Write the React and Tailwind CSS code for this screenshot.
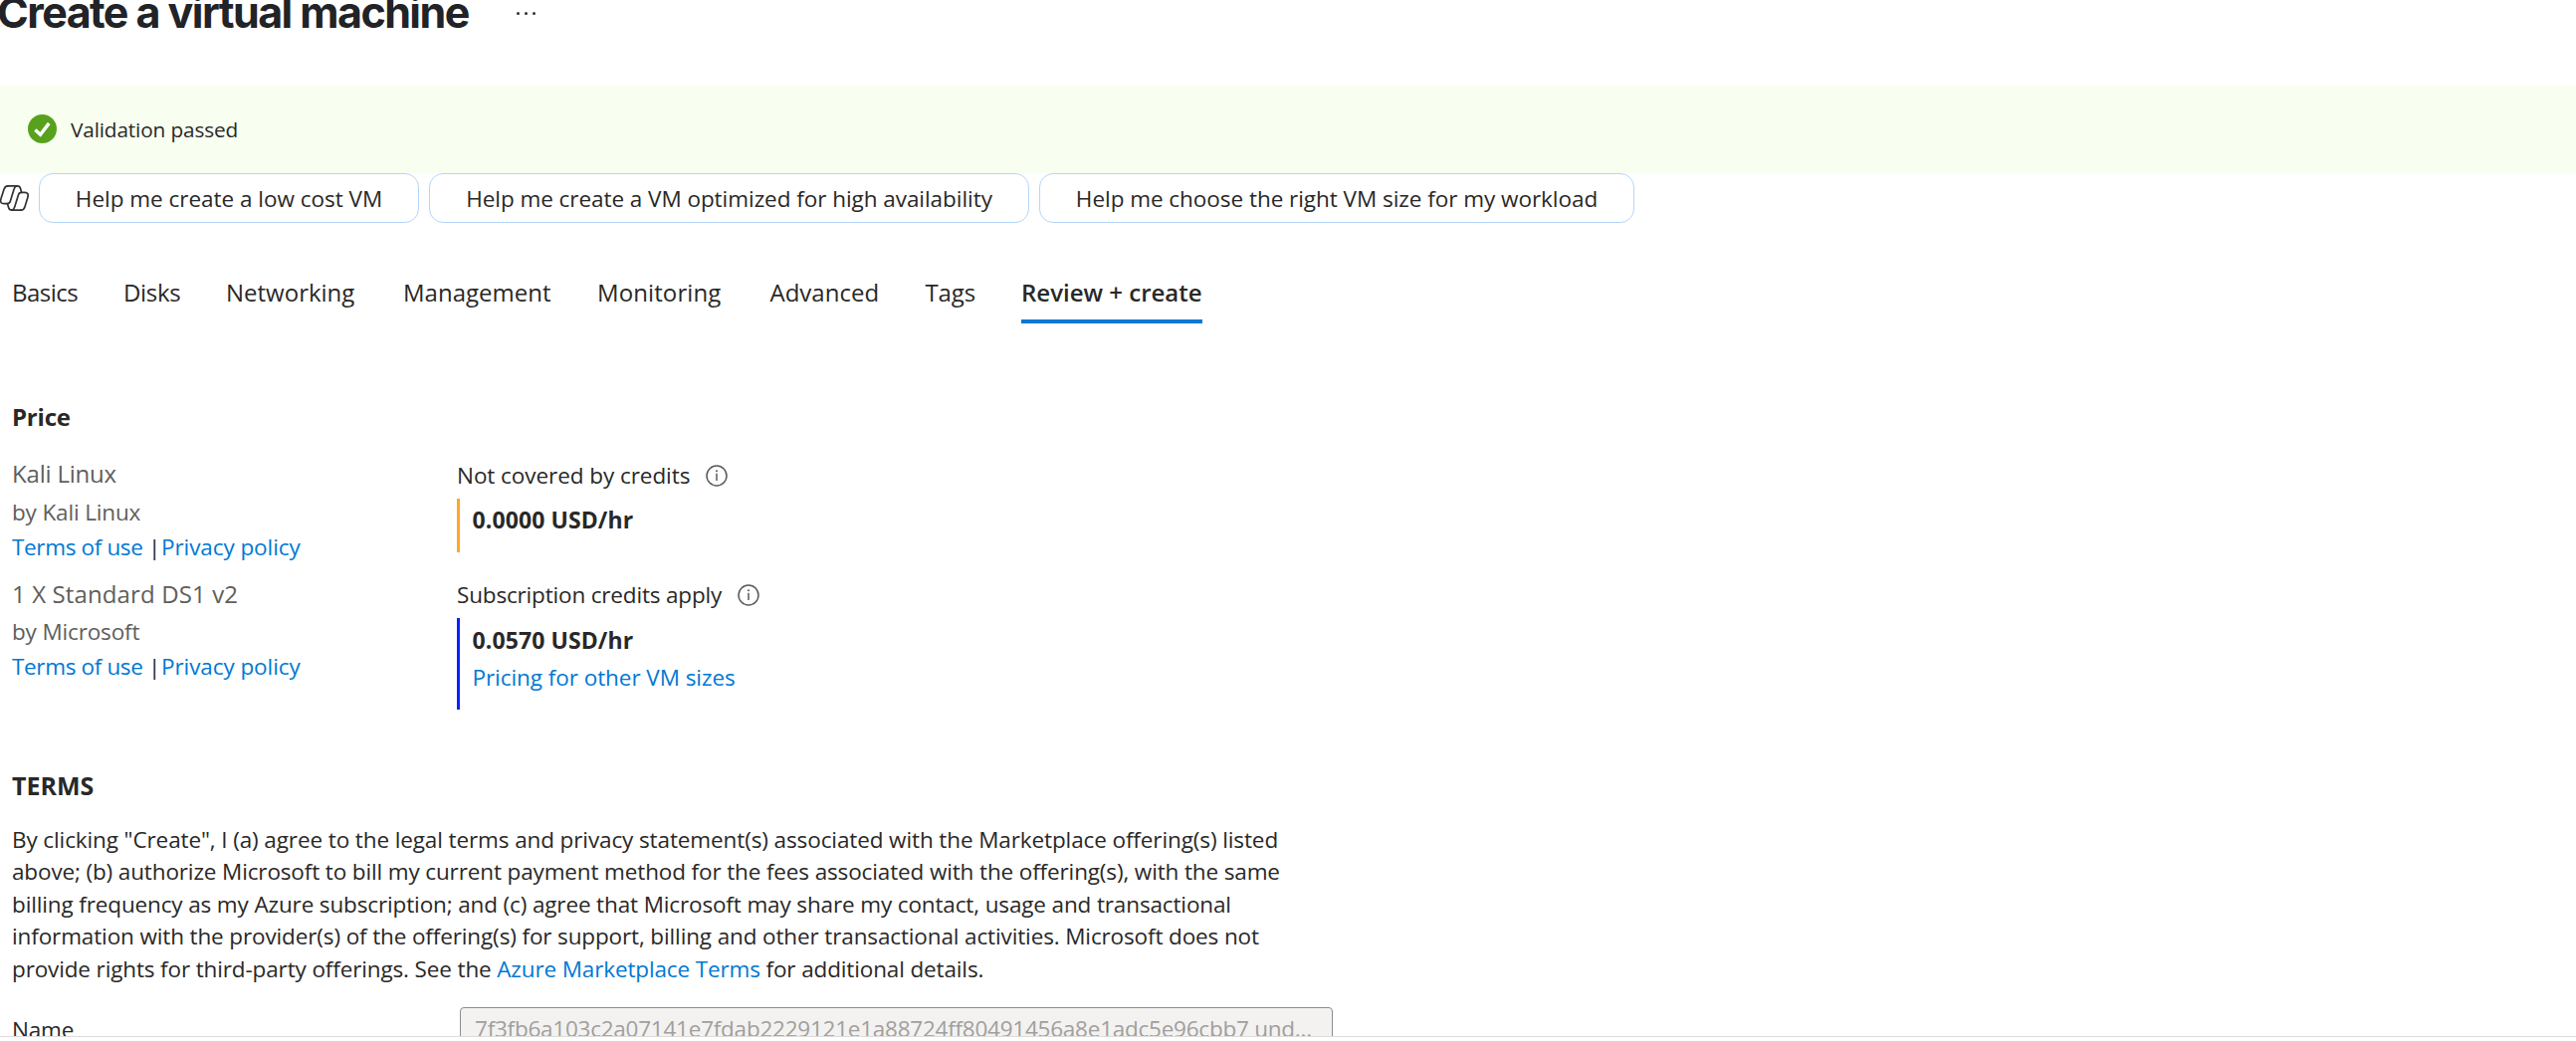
import React from "react";

const suggestions = [
  { label: "Help me create a low cost VM", cls: "w-[382px] tracking-[-0.02px]" },
  { label: "Help me create a VM optimized for high availability", cls: "w-[603px] tracking-[-0.05px]" },
  { label: "Help me choose the right VM size for my workload", cls: "w-[598px] tracking-[-0.04px]" },
];

const tabs = [
  { label: "Basics", cls: "tracking-[-0.5px]" },
  { label: "Disks", cls: "tracking-[-0.3px]" },
  { label: "Networking", cls: "" },
  { label: "Management", cls: "" },
  { label: "Monitoring", cls: "tracking-[0.1px]" },
  { label: "Advanced", cls: "" },
  { label: "Tags", cls: "tracking-[-0.1px]" },
];

function CheckIcon() {
  return (
    <svg className="size-[29px]" viewBox="0 0 29 29" fill="none">
      <circle cx="14.5" cy="14.5" r="14.5" fill="#57a11c" />
      <path d="M7.4 15.4 12.6 20.2 21.2 8.9" stroke="#fff" strokeWidth="3.4" />
    </svg>
  );
}

function CopilotIcon() {
  return (
    <svg className="h-[26px] w-[29px] shrink-0" viewBox="0 0 29 26" fill="none" stroke="#323232" strokeWidth="1.7" strokeLinejoin="round" strokeLinecap="round">
      <path d="M7.8 .9h9.6c1.800 0 2.700.9 3.200 2.600l1 3.900" />
      <path d="M7.800.9C5.700.9 4.600 2.200 4 4.200L1 13.600c-1.100 3.200.1 5.100 2.900 5.100h3.300c1.700 0 2.700-.9 3.200-2.700L14 4.300c.6-2.100 1.300-3.100 2.800-3.400" />
      <path d="M21.200 25.100h-9.400c-1.800 0-2.700-.9-3.200-2.600l-1.100-3.800" />
      <path d="M21.200 25.100c2.100 0 3.200-1.300 3.800-3.300l2.800-9.400c1.100-3.200-.1-5-2.900-5h-3.300c-1.700 0-2.700.9-3.200 2.700l-3.600 11.600c-.6 2.100-1.300 3.100-2.800 3.400" />
    </svg>
  );
}

function InfoIcon() {
  return (
    <svg className="-mt-px size-[22px]" viewBox="0 0 22 22" fill="none">
      <circle cx="11" cy="11" r="10" stroke="#5b5a58" strokeWidth="1.500" />
      <path d="M11 8.800v7.200" stroke="#5b5a58" strokeWidth="1.500" />
      <circle cx="11" cy="6.300" r="1" fill="#5b5a58" />
    </svg>
  );
}

function Offer({ title, publisher, className, titleClass, publisherClass }) {
  return (
    <div className={className}>
      <div className={`text-[24px] leading-[36px] text-[#605e5c] ${titleClass}`}>{title}</div>
      <div className={`text-[22.5px] leading-[35px] tracking-[-0.15px] text-[#605e5c] ${publisherClass}`}>{publisher}</div>
      <div className="flex text-[22.5px] leading-[35px] text-[#0078d4]">
        <a className="w-[137px] tracking-[-0.35px]">Terms of use</a>
        <span className="w-[13px] text-[#292827]">|</span>
        <a className="tracking-[-0.08px]">Privacy policy</a>
      </div>
    </div>
  );
}

export default function App() {
  return (
    <div className="h-[1046px] w-full overflow-hidden bg-white font-['Open_Sans',sans-serif] text-[#292827]">
      <div className="h-[1042px] overflow-hidden border-b border-[#dddcda]">
        <header className="-mt-[14px] flex h-[100px] items-start">
          <h1 className="-ml-[3px] w-[522px] whitespace-nowrap font-['Inter',sans-serif] text-[43px] font-bold leading-[52px] tracking-[-1.55px] text-[#212327]">
            Create a virtual machine
          </h1>
          <div className="mt-[26px] flex gap-[5px]">
            <span className="size-[3px] rounded-full bg-[#323130]" />
            <span className="size-[3px] rounded-full bg-[#323130]" />
            <span className="size-[3px] rounded-full bg-[#323130]" />
          </div>
        </header>

        <div className="flex h-[88px] items-center gap-[14px] bg-[#f8fff0] pb-px pl-7">
          <CheckIcon />
          <span className="pt-[2px] text-[20.8px] tracking-[-0.15px]">Validation passed</span>
        </div>

        <div className="flex h-[50px] items-center gap-[10px]">
          <CopilotIcon />
          {suggestions.map((s) => (
            <button
              key={s.label}
              className={`flex h-[50px] shrink-0 items-center justify-center whitespace-nowrap rounded-[14px] border border-[#b4d6fa] pt-[2px] text-[22.5px] leading-[36px] ${s.cls}`}
            >
              {s.label}
            </button>
          ))}
        </div>

        <nav className="mt-[52px] grid h-[49px] grid-cols-[112px_103px_178px_195px_173.5px_156px_96.500px_182px] pl-[12px] text-[24px] leading-[36px]">
          {tabs.map((t) => (
            <span key={t.label} className={t.cls}>
              {t.label}
            </span>
          ))}
          <span className="whitespace-nowrap border-b-4 border-[#0f78d4] font-semibold">Review + create</span>
        </nav>

        <main className="pl-[12px]">
          <h2 className="mt-[76px] text-[24px] font-bold leading-[36px] tracking-[-0.2px]">Price</h2>
          <section className="mt-[21px] grid h-[255px] grid-cols-[447px_1fr]">
            <div>
              <Offer title="Kali Linux" titleClass="tracking-[-0.2px]" publisher="by Kali Linux" publisherClass="mt-[3px]" />
              <Offer
                className="mt-[12px]"
                title="1 X Standard DS1 v2"
                titleClass="tracking-[0.12px]"
                publisher="by Microsoft"
                publisherClass="mt-[2px]"
              />
            </div>
            <div className="pt-[2px] text-[22.5px] leading-[36px]">
              <div className="flex items-center gap-[16px]">
                <span className="tracking-[-0.06px]">Not covered by credits</span>
                <InfoIcon />
              </div>
              <div className="mt-[5px] h-[54px] border-l-[3px] border-[#ffa724] pl-[12.5px] pt-[3px] text-[23px] font-bold tracking-[0.1px]">
                0.0000 USD/hr
              </div>
              <div className="mt-[25px] flex items-center gap-[16px]">
                <span className="tracking-[-0.17px]">Subscription credits apply</span>
                <InfoIcon />
              </div>
              <div className="mt-[5px] h-[92px] border-l-[3px] border-[#0f1fff] pl-[12.5px] pt-[4px]">
                <div className="text-[23px] font-bold tracking-[0.1px]">0.0570 USD/hr</div>
                <a className="mt-[2px] block tracking-[-0.06px] text-[#0078d4]">Pricing for other VM sizes</a>
              </div>
            </div>
          </section>

          <h2 className="mt-[58px] text-[25px] font-bold leading-[36px]">TERMS</h2>
          <p className="mt-[21px] whitespace-nowrap text-[22.5px] leading-[32.4px] tracking-[-0.135px]">
            <span className="tracking-[-0.11px]">
              By clicking "Create", I (a) agree to the legal terms and privacy statement(s) associated with the Marketplace offering(s) listed
            </span>
            <br />
            above; (b) authorize Microsoft to bill my current payment method for the fees associated with the offering(s), with the same
            <br />
            billing frequency as my Azure subscription; and (c) agree that Microsoft may share my contact, usage and transactional
            <br />
            <span className="tracking-[-0.13px]">
              information with the provider(s) of the offering(s) for support, billing and other transactional activities. Microsoft does not
            </span>
            <br />
            provide rights for third-party offerings. See the <a className="text-[#0078d4]">Azure Marketplace Terms</a> for additional
            details.
          </p>

          <div className="mt-[22px] flex h-[58px] text-[22.5px] leading-[36px]">
            <label className="w-[450px] pt-[5px] tracking-[-0.2px]">Name</label>
            <div className="w-[877px] whitespace-nowrap rounded-[4px] border border-[#8f8d8b] bg-[#f3f2f1] pl-[14px] pt-[3px] tracking-[-0.24px] text-[#a19f9d]">
              7f3fb6a103c2a07141e7fdab2229121e1a88724ff80491456a8e1adc5e96cbb7 und...
            </div>
          </div>
        </main>
      </div>
    </div>
  );
}
